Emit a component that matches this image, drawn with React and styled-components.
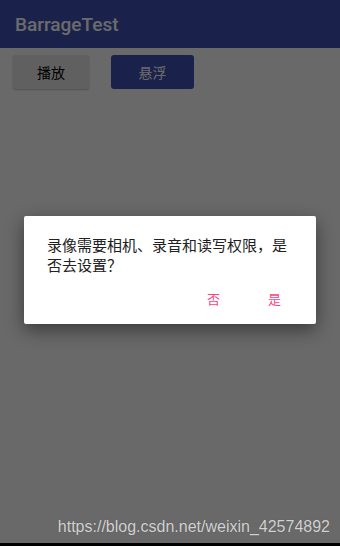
import React from 'react'
import styled, { createGlobalStyle } from 'styled-components'

const GlobalStyle = createGlobalStyle`
  html, body {
    margin: 0;
    padding: 0;
    width: 340px;
    height: 546px;
    overflow: hidden;
    background: #fafafa;
  }
  * {
    box-sizing: border-box;
  }
`

const Screen = styled.div`
  position: relative;
  width: 340px;
  height: 546px;
  display: flex;
  flex-direction: column;
  background: #fafafa;
  font-family: Roboto, "Noto Sans CJK SC", sans-serif;
`

const AppBar = styled.div`
  height: 48px;
  flex-shrink: 0;
  display: flex;
  align-items: center;
  padding-left: 15px;
  background: #3f51b5;
  color: #ffffff;
  font-size: 19px;
  font-weight: 500;
`

const Toolbar = styled.div`
  display: flex;
  gap: 22px;
  padding: 7px 0 0 13px;
`

const Button = styled.button`
  width: ${p => p.width}px;
  height: 34px;
  border: none;
  border-radius: 3px;
  font-family: "Noto Sans CJK SC", sans-serif;
  font-size: 14px;
  background: ${p => (p.primary ? '#3f51b5' : '#e4e4e4')};
  color: ${p => (p.primary ? '#ffffff' : '#000000')};
  box-shadow: ${p => (p.primary ? 'none' : '0 1px 2px rgba(0,0,0,0.25)')};
`

const Spacer = styled.div`
  flex: 1;
`

const NavStrip = styled.div`
  height: 3px;
  background: #000;
`

const Scrim = styled.div`
  position: absolute;
  inset: 0 0 3px 0;
  background: rgba(0, 0, 0, 0.58);
  display: flex;
  justify-content: center;
  padding-top: 216px;
`

const Dialog = styled.div`
  width: 292px;
  height: 108px;
  background: #ffffff;
  border-radius: 2px;
  box-shadow: 0 6px 18px rgba(0, 0, 0, 0.45);
  display: flex;
  flex-direction: column;
`

const Message = styled.div`
  padding: 19px 24px 0 23px;
  font-family: "Noto Sans CJK SC", sans-serif;
  font-size: 15px;
  line-height: 20px;
  color: #212121;
`

const Actions = styled.div`
  margin-top: auto;
  display: flex;
  justify-content: flex-end;
  padding: 0 11px 12px 0;
`

const TextButton = styled.div`
  width: 61px;
  height: 28px;
  display: flex;
  align-items: center;
  justify-content: center;
  font-family: "Noto Sans CJK SC", sans-serif;
  font-size: 13px;
  color: #ff4081;
`

const Watermark = styled.div`
  position: absolute;
  right: 10px;
  bottom: 10px;
  font-family: "Liberation Sans", Arial, sans-serif;
  font-size: 16px;
  color: #d2d2d2;
  text-shadow: 0 0 1px rgba(0, 0, 0, 0.3);
`

const App = () => {
  return (
    <Screen>
      <GlobalStyle />
      <AppBar>BarrageTest</AppBar>
      <Toolbar>
        <Button width={76}>播放</Button>
        <Button width={83} primary>悬浮</Button>
      </Toolbar>
      <Spacer />
      <NavStrip />
      <Scrim>
        <Dialog>
          <Message>录像需要相机、录音和读写权限，是否去设置？</Message>
          <Actions>
            <TextButton>否</TextButton>
            <TextButton>是</TextButton>
          </Actions>
        </Dialog>
      </Scrim>
      <Watermark>https://blog.csdn.net/weixin_42574892</Watermark>
    </Screen>
  )
}

export default App
